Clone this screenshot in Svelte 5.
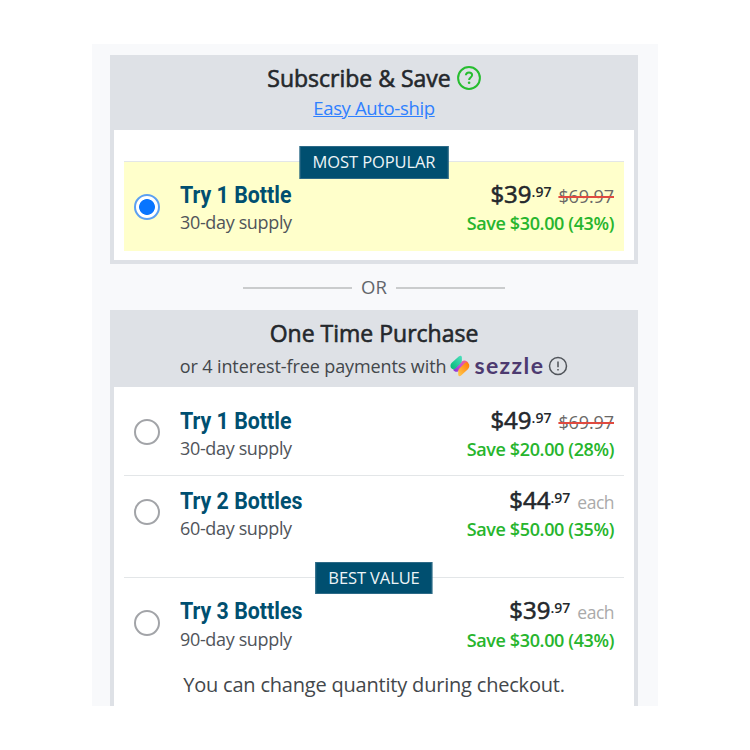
<script lang="ts">
  type Offer = {
    id: string;
    title: string;
    supply: string;
    dollars: string;
    cents: string;
    was?: string;
    save: string;
    badge?: string;
  };

  const subscribe: Offer[] = [
    { id: "sub-1", title: "Try 1 Bottle", supply: "30-day supply", dollars: "$39", cents: ".97", was: "$69.97", save: "Save $30.00 (43%)", badge: "MOST POPULAR" },
  ];

  const oneTime: Offer[] = [
    { id: "one-1", title: "Try 1 Bottle", supply: "30-day supply", dollars: "$49", cents: ".97", was: "$69.97", save: "Save $20.00 (28%)" },
    { id: "one-2", title: "Try 2 Bottles", supply: "60-day supply", dollars: "$44", cents: ".97", save: "Save $50.00 (35%)" },
    { id: "one-3", title: "Try 3 Bottles", supply: "90-day supply", dollars: "$39", cents: ".97", save: "Save $30.00 (43%)", badge: "BEST VALUE" },
  ];

  let selected = $state("sub-1");
</script>

{#snippet row(offer: Offer)}
  <label class="offer" class:selected={selected === offer.id} class:badged={offer.badge}>
    {#if offer.badge}
      <span class="badge">{offer.badge}</span>
    {/if}
    <input type="radio" name="offer" value={offer.id} bind:group={selected} />
    <span class="info">
      <span class="title">{offer.title}</span>
      <span class="supply">{offer.supply}</span>
    </span>
    <span class="pricing">
      <span class="price">
        <span class="dollars">{offer.dollars}</span><span class="cents">{offer.cents}</span>
        {#if offer.was}
          <s>{offer.was}</s>
        {:else}
          <span class="each">each</span>
        {/if}
      </span>
      <span class="save">{offer.save}</span>
    </span>
  </label>
{/snippet}

<main>
  <section class="box subscribe">
    <header>
      <h2>
        Subscribe &amp; Save
        <svg class="help" viewBox="0 0 24 24" width="24" height="24">
          <circle cx="12" cy="12" r="10.9" />
          <path d="M8.9 9.3C9 7.4 10.2 6.4 12 6.4c1.9 0 3.1 1.1 3.1 2.7 0 2.4-3 2.4-3 4.9" />
          <circle class="dot" cx="12.1" cy="16.8" r="1.3" />
        </svg>
      </h2>
      <a href="#autoship">Easy Auto-ship</a>
    </header>
    <div class="offers">
      {#each subscribe as offer (offer.id)}
        {@render row(offer)}
      {/each}
    </div>
  </section>

  <div class="or"><span>OR</span></div>

  <section class="box onetime">
    <header>
      <h2>One Time Purchase</h2>
      <div class="installments">
        <span class="terms">or 4 interest-free payments with</span>
        <svg class="mark" viewBox="0 0 20 22" width="20" height="22">
          <defs>
            <linearGradient id="green" x1="0" y1="1" x2="1" y2="0">
              <stop offset="0" stop-color="#00b874" />
              <stop offset="1" stop-color="#50e0c0" />
            </linearGradient>
            <linearGradient id="purple" x1="0" y1="1" x2="1" y2="0">
              <stop offset="0" stop-color="#8333d4" />
              <stop offset="0.5" stop-color="#c650d8" />
              <stop offset="1" stop-color="#ff6a70" />
            </linearGradient>
            <linearGradient id="orange" x1="0" y1="1" x2="1" y2="0">
              <stop offset="0" stop-color="#ffc950" />
              <stop offset="1" stop-color="#ff7a00" />
            </linearGradient>
          </defs>
          <path fill="url(#purple)" d="M3.2 14.7L12.2 6.2C14.2 4.5 17.5 5.6 18.3 8.1L8.2 16.3C6.6 17.4 4.3 16.8 3.2 14.7Z" />
          <path fill="url(#green)" d="M1.7 13.6C-.2 11.8.3 9.3 2 7.6L9 1.3C10.4.1 11.9.7 11.9 2.3V5.500C11.9 6.7 11.4 7.6 10.5 8.5L5.3 13.6C4.1 14.7 2.7 14.7 1.7 13.6Z" />
          <path fill="url(#orange)" d="M18.2 8C20 10 19.5 12.6 17.9 14.2L11.1 20.6C9.7 21.8 8.2 21.2 8.2 19.6V16.4C8.2 15.2 8.7 14.2 9.6 13.3L14.7 8.3C15.8 7.2 17.2 7 18.2 8Z" />
        </svg>
        <span class="sezzle">sezzle</span>
        <svg class="info-icon" viewBox="0 0 20 20" width="20" height="20">
          <circle cx="10" cy="10" r="8.5" />
          <path d="M10 5.5V11.2M10 13V14.6" />
        </svg>
      </div>
    </header>
    <div class="offers">
      {#each oneTime as offer (offer.id)}
        {@render row(offer)}
      {/each}
    </div>
    <p>You can change quantity during checkout.</p>
  </section>
</main>

<style>
  :global(body) {
    margin: 0;
    background: #fff;
  }
  main {
    box-sizing: border-box;
    width: 566px;
    height: 662px;
    margin: 44px 0 0 92px;
    padding: 11px 20px 0 18px;
    overflow: hidden;
    background: #f8f9fb;
    color: #24282c;
    font-family: "Open Sans", "Noto Sans", sans-serif;
    font-size: 18px;
  }
  .box {
    box-sizing: border-box;
    border: 4px solid #dee1e6;
    border-top: 0;
    background: #fff;
  }
  .subscribe {
    height: 209px;
  }
  .onetime {
    height: 420px;
  }
  header {
    display: flex;
    flex-direction: column;
    align-items: center;
    height: 75px;
    background: #dee1e6;
  }
  .onetime header {
    height: 77px;
  }
  h2 {
    display: flex;
    align-items: center;
    gap: 6px;
    margin: 7px 0 0;
    font-size: 23px;
    line-height: 32px;
    font-weight: 500;
    -webkit-text-stroke: 0.6px;
  }
  a {
    font-size: 18.5px;
    line-height: 28px;
    letter-spacing: -0.35px;
    color: #2f80ff;
  }
  svg {
    flex: none;
    fill: none;
  }
  .help {
    stroke: #27bd30;
    stroke-width: 2;
  }
  .help .dot {
    fill: #27bd30;
    stroke: none;
  }
  .installments {
    display: flex;
    align-items: center;
    height: 33px;
    color: #43474b;
  }
  .terms {
    letter-spacing: -0.1px;
  }
  .mark {
    margin-left: 4px;
  }
  .sezzle {
    margin: -2px 4px 0 4px;
    font-family: Lato, sans-serif;
    font-size: 23px;
    line-height: 28px;
    font-weight: 700;
    letter-spacing: 1.4px;
    color: #4d3a70;
  }
  .info-icon {
    stroke: #50545a;
    stroke-width: 1.5;
  }
  .offers {
    padding: 0 10px;
  }
  .subscribe .offers {
    padding-top: 31px;
  }
  .offer {
    position: relative;
    display: flex;
    box-sizing: border-box;
    height: 80px;
    padding: 17px 10px 0;
    border-top: 1px solid #e3e6e8;
  }
  .onetime .offer:first-child {
    height: 88px;
    border-top-color: transparent;
  }
  .offer:nth-child(2) {
    height: 102px;
    padding-top: 9px;
  }
  .offer.badged {
    height: 90px;
  }
  .selected {
    background: #ffffcb;
  }
  .badge {
    position: absolute;
    top: -16px;
    left: 50%;
    box-sizing: border-box;
    padding: 0 12px;
    border: 1px solid #2d6a87;
    background: #004f70;
    color: #edf4f7;
    font-size: 16.5px;
    line-height: 30px;
    letter-spacing: -0.1px;
    white-space: nowrap;
    transform: translateX(-50%);
  }
  .subscribe .badge {
    padding-bottom: 1px;
  }
  input {
    appearance: none;
    flex: none;
    box-sizing: border-box;
    width: 26px;
    height: 26px;
    margin: 14px 20px 0 0;
    border: 2px solid #a2a4a8;
    border-radius: 50%;
    background: #fff;
  }
  .badged input {
    margin-top: 15px;
  }
  input:checked {
    border-color: #5ba0f2;
    background: radial-gradient(circle, #0875ff 7.5px, #fff 8.3px);
  }
  .info {
    display: flex;
    flex-direction: column;
    color: #50545a;
  }
  .title {
    width: max-content;
    font-family: Roboto, sans-serif;
    font-size: 24px;
    line-height: 32px;
    font-weight: 700;
    color: #004f70;
    transform: scaleX(0.89);
    transform-origin: left;
  }
  .supply {
    font-size: 18px;
    line-height: 22px;
    letter-spacing: -0.35px;
  }
  .onetime .badged .supply {
    line-height: 24px;
  }
  .pricing {
    display: flex;
    flex-direction: column;
    align-items: flex-end;
    margin: -1px 0 0 auto;
  }
  .price {
    display: flex;
    align-items: baseline;
    height: 32px;
    line-height: 32px;
  }
  .dollars {
    font-size: 24px;
    font-weight: 500;
    -webkit-text-stroke: 0.6px;
  }
  .cents {
    position: relative;
    top: -6px;
    font-size: 14px;
    font-weight: 600;
  }
  s {
    margin-left: 7px;
    letter-spacing: -0.1px;
    color: #6a6866;
    text-decoration-color: #e04a40;
    text-decoration-thickness: 2px;
  }
  .each {
    margin-left: 7px;
    font-size: 17.5px;
    letter-spacing: -0.5px;
    color: #aaa;
  }
  .save {
    line-height: 27px;
    font-weight: 600;
    letter-spacing: -0.37px;
    color: #27b52d;
  }
  .onetime .badged .save {
    line-height: 29px;
  }
  .or {
    display: flex;
    align-items: center;
    justify-content: center;
    gap: 9px;
    height: 46px;
    color: #62666b;
  }
  .or span {
    margin-top: -2px;
    font-size: 18.5px;
  }
  .or::before,
  .or::after {
    content: "";
    width: 109px;
    height: 2px;
    margin-top: 2px;
    background: #cacccd;
  }
  p {
    margin: 4px 0 0;
    text-align: center;
    font-size: 20px;
    line-height: 28px;
    letter-spacing: -0.2px;
    color: #43474b;
  }
</style>
